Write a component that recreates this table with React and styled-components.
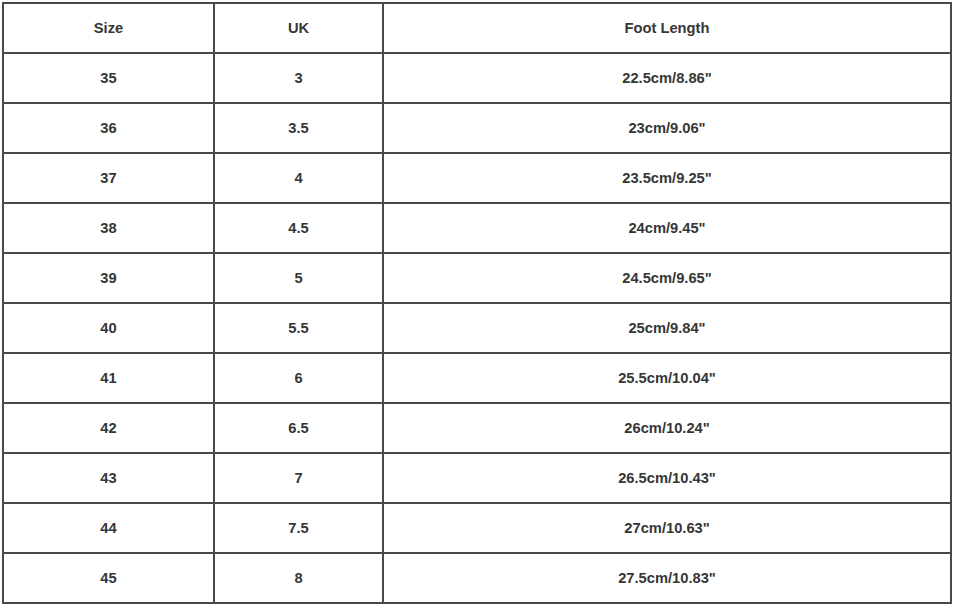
import React from 'react'
import styled, { createGlobalStyle } from 'styled-components';

const GlobalStyle = createGlobalStyle`
    html, body {
        margin: 0;
        padding: 0;
        background: #fff;
    }
`;

const Page = styled.div`
    padding: 2px 2px 0 2px;
    font-family: "Liberation Sans", Arial, sans-serif;
`;

const Table = styled.table`
    width: 948px;
    border-collapse: collapse;
    table-layout: fixed;
    border: 2px solid #5c5c5c;
`;

const Cell = styled.td`
    height: 48px;
    padding: 0;
    border: 2px solid #4a4a4a;
    text-align: center;
    vertical-align: middle;
    font-size: 14.7px;
    font-weight: bold;
    color: #363636;
`;

const Col = styled.col`
    width: ${props => props.w}px;
`;

const rows = [
    ['35', '3', '22.5cm/8.86"'],
    ['36', '3.5', '23cm/9.06"'],
    ['37', '4', '23.5cm/9.25"'],
    ['38', '4.5', '24cm/9.45"'],
    ['39', '5', '24.5cm/9.65"'],
    ['40', '5.5', '25cm/9.84"'],
    ['41', '6', '25.5cm/10.04"'],
    ['42', '6.5', '26cm/10.24"'],
    ['43', '7', '26.5cm/10.43"'],
    ['44', '7.5', '27cm/10.63"'],
    ['45', '8', '27.5cm/10.83"'],
];

export default function App() {
    return (
        <Page>
            <GlobalStyle />
            <Table>
                <colgroup>
                    <Col w={211} />
                    <Col w={169} />
                    <Col w={568} />
                </colgroup>
                <tbody>
                    <tr>
                        <Cell>Size</Cell>
                        <Cell>UK</Cell>
                        <Cell>Foot Length</Cell>
                    </tr>
                    {rows.map(r => (
                        <tr key={r[0]}>
                            {r.map((v, i) => <Cell key={i}>{v}</Cell>)}
                        </tr>
                    ))}
                </tbody>
            </Table>
        </Page>
    )
}
